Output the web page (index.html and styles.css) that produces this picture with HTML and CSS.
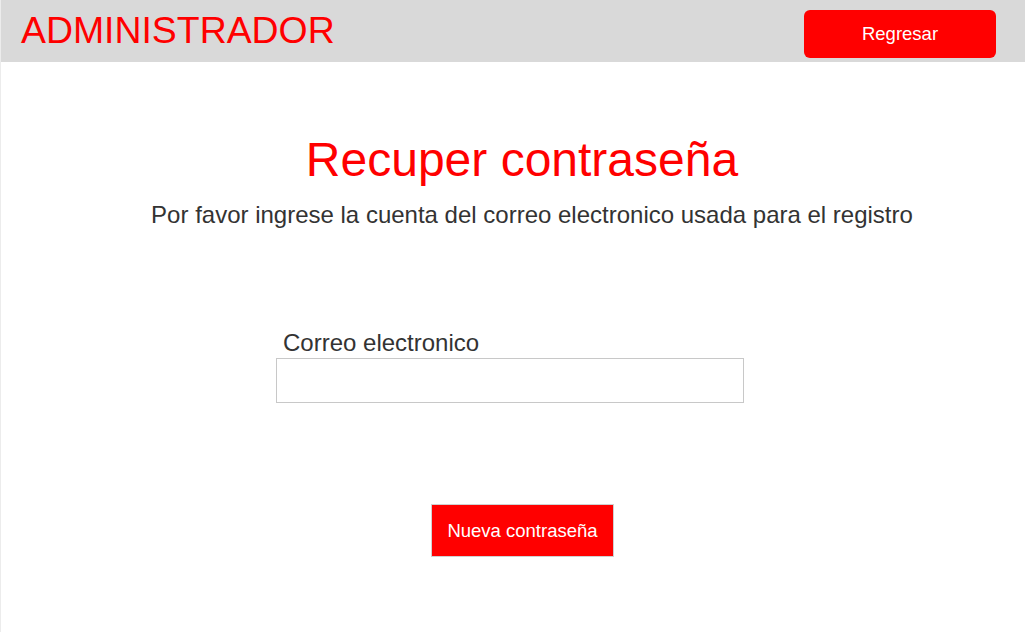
FILE: index.html
```html
<!DOCTYPE html>
<html lang="es">
<head>
<meta charset="utf-8">
<title>Administrador - Recuperar contraseña</title>
<link rel="stylesheet" href="styles.css">
</head>
<body>
<div class="page">
  <header class="topbar">
    <div class="brand">ADMINISTRADOR</div>
    <button class="btn-back" type="button">Regresar</button>
  </header>
  <main class="content">
    <h1 class="title">Recuper contraseña</h1>
    <p class="subtitle">Por favor ingrese la cuenta del correo electronico usada para el registro</p>
    <form class="form">
      <label class="label" for="email">Correo electronico</label>
      <input class="input" id="email" type="email">
      <div class="actions">
        <button class="btn-submit" type="button">Nueva contraseña</button>
      </div>
    </form>
  </main>
</div>
</body>
</html>
```
FILE: styles.css
```css
html, body {
  margin: 0;
  padding: 0;
  background: #ffffff;
}

body {
  font-family: "Liberation Sans", Arial, sans-serif;
}

.page {
  min-height: 632px;
  border-left: 1px solid #ececec;
  box-sizing: border-box;
}

.topbar {
  height: 62px;
  background: #d9d9d9;
  display: flex;
  justify-content: space-between;
  align-items: flex-start;
  padding: 0 29px 0 20px;
}

.brand {
  margin-top: 9px;
  font-size: 37.4px;
  line-height: 42px;
  color: #ff0000;
}

.btn-back {
  margin-top: 10px;
  width: 192px;
  height: 48px;
  border: none;
  border-radius: 6px;
  background: #ff0000;
  color: #ffffff;
  font-family: "Liberation Sans", Arial, sans-serif;
  font-size: 18.5px;
  cursor: pointer;
}

.content {
  text-align: center;
}

.title {
  margin: 70px 0 0;
  padding-left: 18px;
  font-size: 48px;
  line-height: 56px;
  font-weight: normal;
  color: #ff0000;
}

.subtitle {
  margin: 13px 0 0;
  padding-left: 38px;
  font-size: 24px;
  line-height: 28px;
  color: #333333;
}

.form {
  width: 474px;
  margin: 100px auto 0;
  text-align: left;
}

.label {
  display: block;
  padding-left: 7px;
  font-size: 24px;
  line-height: 28px;
  color: #333333;
}

.input {
  display: block;
  margin: 1px 0 0;
  width: 468px;
  height: 45px;
  box-sizing: border-box;
  border: 1px solid #c8c8c8;
  padding: 0 8px;
  font-family: "Liberation Sans", Arial, sans-serif;
  font-size: 18px;
  outline: none;
}

.actions {
  margin-top: 101px;
  padding-left: 19px;
  display: flex;
  justify-content: center;
}

.btn-submit {
  width: 183px;
  height: 53px;
  box-sizing: border-box;
  border: 1px solid #d0d0d0;
  background: #ff0000;
  color: #ffffff;
  font-family: "Liberation Sans", Arial, sans-serif;
  font-size: 18.5px;
  cursor: pointer;
}
```
